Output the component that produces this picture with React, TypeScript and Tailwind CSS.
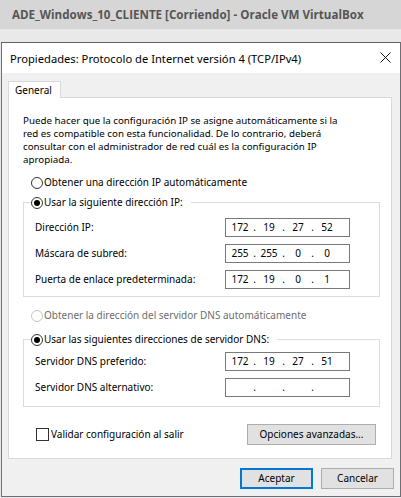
function Radio({ checked = false, disabled = false }: { checked?: boolean; disabled?: boolean }) {
  return (
    <span
      className={`flex h-[12px] w-[12px] shrink-0 items-center justify-center rounded-full border bg-white ${
        disabled ? 'border-[#c4c4c4]' : 'border-[#333333]'
      }`}
    >
      {checked && <span className="h-[6px] w-[6px] rounded-full bg-black" />}
    </span>
  );
}

function IpBox({ parts }: { parts: string[] }) {
  return (
    <div className="flex h-[19px] w-[125px] items-center border border-[#7a7a7a] bg-white pl-[3px]">
      {parts.map((p, i) => (
        <div key={i} className="flex items-center">
          <span className="w-[22px] text-center">{p}</span>
          {i < 3 && <span className="w-[7px] text-center">.</span>}
        </div>
      ))}
    </div>
  );
}

function Row({ label, parts }: { label: string; parts: string[] }) {
  return (
    <div className="flex items-center justify-between pl-[11px] pr-[29px]">
      <span>{label}</span>
      <IpBox parts={parts} />
    </div>
  );
}

function Button({ children, focused = false, className = '' }: { children: React.ReactNode; focused?: boolean; className?: string }) {
  return (
    <div
      className={`flex items-center justify-center bg-[#e1e1e1] ${
        focused ? 'border-2 border-[#0078d7]' : 'border border-[#adadad]'
      } ${className}`}
    >
      {children}
    </div>
  );
}

export default function App() {
  return (
    <div className="flex h-[498px] w-[401px] flex-col overflow-hidden bg-[#e9e9e9] font-['Noto_Sans',sans-serif] text-[10px] leading-[13px] text-black">
      {/* VirtualBox window title */}
      <div className="flex h-[29px] shrink-0 items-center whitespace-nowrap bg-[#d6d6d6] px-[12px] font-['Open_Sans',sans-serif] text-[11.6px] font-bold text-[#555555]">
        ADE_Windows_10_CLIENTE [Corriendo] - Oracle VM VirtualBox
      </div>
      <div className="h-[13px] shrink-0" />

      {/* dialog */}
      <div className="ml-[1px] flex h-[455px] w-[400px] shrink-0 flex-col border border-[#6b6f76] border-t-[#5a6270] bg-[#f0f0f0]">
        <div className="flex h-[30px] shrink-0 items-center justify-between bg-white pl-[8px] pr-[9px] text-[11.2px]">
          <span>Propiedades: Protocolo de Internet versión 4 (TCP/IPv4)</span>
          <svg width="11" height="11" viewBox="0 0 11 11" className="mb-[1px]">
            <path d="M0.5 0.5 L10.5 10.5 M10.5 0.5 L0.5 10.5" stroke="#111" strokeWidth="1" fill="none" />
          </svg>
        </div>

        <div className="flex flex-col pl-[6px] pr-[8px] pt-[8px]">
          {/* tab */}
          <div className="relative z-10 -mb-px flex h-[17px] w-[53px] items-center border border-b-0 border-[#d9d9d9] bg-white pl-[6px]">
            General
          </div>

          {/* tab panel */}
          <div className="flex h-[362px] flex-col border border-[#d9d9d9] bg-white pl-[14px] pr-[11px] pt-[16px]">
            <div className="whitespace-nowrap text-[9.75px]">
              <div>Puede hacer que la configuración IP se asigne automáticamente si la</div>
              <div>red es compatible con esta funcionalidad. De lo contrario, deberá</div>
              <div>consultar con el administrador de red cuál es la configuración IP</div>
              <div>apropiada.</div>
            </div>

            <div className="mt-[10px] flex h-[13px] items-center gap-[1px] pl-[8px]">
              <Radio />
              <span>Obtener una dirección IP automáticamente</span>
            </div>

            <fieldset className="mt-[7px] border border-[#dcdcdc] pb-[7px] pt-[9px]">
              <legend className="ml-[7px] flex h-[13px] items-center gap-[1px] pr-[8px]">
                <Radio checked />
                <span>Usar la siguiente dirección IP:</span>
              </legend>
              <div className="flex flex-col gap-[7px]">
                <Row label="Dirección IP:" parts={['172', '19', '27', '52']} />
                <Row label="Máscara de subred:" parts={['255', '255', '0', '0']} />
                <Row label="Puerta de enlace predeterminada:" parts={['172', '19', '0', '1']} />
              </div>
            </fieldset>

            <div className="mt-[12px] flex h-[13px] items-center gap-[1px] pl-[8px] text-[#6d6d6d]">
              <Radio disabled />
              <span>Obtener la dirección del servidor DNS automáticamente</span>
            </div>

            <fieldset className="mt-[11px] border border-[#dcdcdc] pb-[9px] pt-[6px]">
              <legend className="ml-[7px] flex h-[13px] items-center gap-[1px] pr-[8px]">
                <Radio checked />
                <span>Usar las siguientes direcciones de servidor DNS:</span>
              </legend>
              <div className="flex flex-col gap-[7px]">
                <Row label="Servidor DNS preferido:" parts={['172', '19', '27', '51']} />
                <Row label="Servidor DNS alternativo:" parts={['', '', '', '']} />
              </div>
            </fieldset>

            <div className="mt-[17px] flex items-center justify-between pl-[13px] pr-[4px]">
              <div className="flex items-center gap-[2px]">
                <span className="h-[13px] w-[13px] border border-[#333333] bg-white" />
                <span>Validar configuración al salir</span>
              </div>
              <Button className="h-[21px] w-[129px]">Opciones avanzadas...</Button>
            </div>
          </div>

          {/* footer buttons */}
          <div className="-mr-[2px] mt-[9px] flex justify-end gap-[8px]">
            <Button focused className="h-[21px] w-[73px]">Aceptar</Button>
            <Button className="h-[21px] w-[73px]">Cancelar</Button>
          </div>
        </div>
      </div>
    </div>
  );
}
